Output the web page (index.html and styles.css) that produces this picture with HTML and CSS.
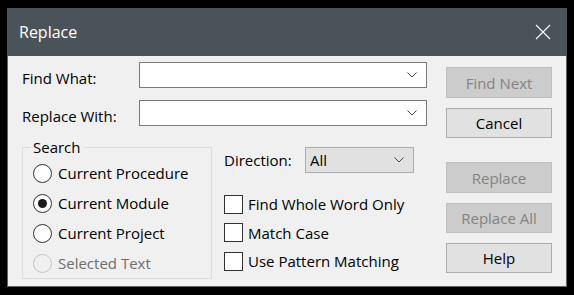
FILE: index.html
```html
<!DOCTYPE html>
<html>
<head>
<meta charset="utf-8">
<link rel="stylesheet" href="styles.css">
</head>
<body>
<div class="dialog">
  <div class="titlebar">
    <span class="title">Replace</span>
    <svg class="close" width="16" height="16" viewBox="0 0 16 16"><path d="M1 1 L15 15 M15 1 L1 15" stroke="#ffffff" stroke-width="1.1" fill="none"/></svg>
  </div>
  <div class="body">
    <div class="main">
      <div class="fields">
        <span class="lbl">Find What:</span>
        <div class="combo"><svg class="chev" width="10" height="6" viewBox="0 0 10 6"><polyline points="0.5,0.5 5,5 9.5,0.5" fill="none" stroke="#444" stroke-width="1"/></svg></div>
        <span class="lbl">Replace With:</span>
        <div class="combo"><svg class="chev" width="10" height="6" viewBox="0 0 10 6"><polyline points="0.5,0.5 5,5 9.5,0.5" fill="none" stroke="#444" stroke-width="1"/></svg></div>
      </div>
      <div class="lower">
        <div class="group">
          <span class="legend">Search</span>
          <div class="radio"><span class="rb"></span><span>Current Procedure</span></div>
          <div class="radio"><span class="rb checked"></span><span>Current Module</span></div>
          <div class="radio"><span class="rb"></span><span>Current Project</span></div>
          <div class="radio disabled"><span class="rb"></span><span>Selected Text</span></div>
        </div>
        <div class="options">
          <div class="dir">
            <span class="dirlbl">Direction:</span>
            <div class="select"><span>All</span><svg class="chev" width="10" height="6" viewBox="0 0 10 6"><polyline points="0.5,0.5 5,5 9.5,0.5" fill="none" stroke="#444" stroke-width="1"/></svg></div>
          </div>
          <div class="checks">
            <div class="check"><span class="cb"></span><span>Find Whole Word Only</span></div>
            <div class="check"><span class="cb"></span><span>Match Case</span></div>
            <div class="check"><span class="cb"></span><span>Use Pattern Matching</span></div>
          </div>
        </div>
      </div>
    </div>
    <div class="buttons">
      <div class="btn disabled b1">Find Next</div>
      <div class="btn b2">Cancel</div>
      <div class="btn disabled b3">Replace</div>
      <div class="btn disabled b4">Replace All</div>
      <div class="btn b5">Help</div>
    </div>
  </div>
</div>
</body>
</html>
```

FILE: styles.css
```css
html, body {
  margin: 0;
  padding: 0;
}
body {
  background: #000000;
  width: 574px;
  height: 295px;
  overflow: hidden;
  font-family: "Open Sans", "Noto Sans", sans-serif;
  font-size: 15px;
  color: #000000;
}
.dialog {
  margin: 8px 0 0 7px;
  width: 560px;
  height: 279px;
  box-sizing: border-box;
  border: 1px solid #5f6568;
  border-top: none;
  background: #f0f0f0;
  display: flex;
  flex-direction: column;
}
.titlebar {
  height: 48px;
  flex: none;
  background: #4b535a;
  display: flex;
  align-items: center;
  justify-content: space-between;
  padding: 0 16px 0 12px;
  margin: 0 -1px;
}
.title {
  color: #ffffff;
  font-size: 16px;
  line-height: 20px;
  margin-top: -1px;
}
.close {
  display: block;
  margin-top: -1px;
}
.body {
  display: flex;
  padding: 6px 0 0 14px;
}
.main {
  width: 405px;
}
.fields {
  display: grid;
  grid-template-columns: 117px 288px;
  row-gap: 12px;
  align-items: center;
}
.lbl {
  line-height: 20px;
  padding-top: 6px;
}
.combo {
  height: 26px;
  box-sizing: border-box;
  border: 1px solid #7a7a7a;
  background: #ffffff;
  display: flex;
  align-items: center;
  justify-content: flex-end;
  padding-right: 9px;
}
.chev {
  display: block;
}
.lower {
  display: flex;
  margin-top: 21px;
}
.group {
  position: relative;
  width: 190px;
  height: 132px;
  box-sizing: border-box;
  border: 1px solid #dcdcdc;
  padding: 10px 0 0 10px;
}
.legend {
  position: absolute;
  left: 8px;
  top: -11px;
  padding: 0 2px;
  background: #f0f0f0;
  line-height: 20px;
}
.radio {
  height: 30px;
  display: flex;
  align-items: center;
  gap: 6px;
  line-height: 20px;
}
.rb {
  width: 19px;
  height: 19px;
  box-sizing: border-box;
  border-radius: 50%;
  border: 1px solid #333333;
  background: #ffffff;
  display: flex;
  align-items: center;
  justify-content: center;
  flex: none;
}
.rb.checked::after {
  content: "";
  width: 9px;
  height: 9px;
  border-radius: 50%;
  background: #1a1a1a;
}
.radio.disabled {
  color: #6d6d6d;
}
.radio.disabled .rb {
  border-color: #c4c4c4;
  background: #f0f0f0;
}
.options {
  margin-left: 12px;
}
.dir {
  display: flex;
  align-items: center;
}
.dirlbl {
  width: 81px;
  line-height: 20px;
}
.select {
  width: 109px;
  height: 26px;
  box-sizing: border-box;
  border: 1px solid #adadad;
  background: #e1e1e1;
  display: flex;
  align-items: center;
  justify-content: space-between;
  padding: 0 9px 0 4px;
  line-height: 20px;
}
.checks {
  margin-top: 17px;
}
.check {
  height: 28.5px;
  display: flex;
  align-items: center;
  gap: 5px;
  line-height: 20px;
}
.cb {
  width: 19px;
  height: 19px;
  box-sizing: border-box;
  border: 1px solid #333333;
  background: #ffffff;
  flex: none;
}
.buttons {
  margin-left: 19px;
  margin-top: 5px;
  width: 106px;
  display: flex;
  flex-direction: column;
}
.btn {
  height: 31px;
  box-sizing: border-box;
  border: 1px solid #adadad;
  background: #e1e1e1;
  display: flex;
  align-items: center;
  justify-content: center;
  line-height: 20px;
}
.btn.disabled {
  background: #cccccc;
  border-color: #bfbfbf;
  color: #838383;
}
.b2 { margin-top: 10px; height: 30px; }
.b3 { margin-top: 24px; }
.b4 { margin-top: 10px; height: 30px; }
.b5 { margin-top: 10px; height: 30px; }
```
